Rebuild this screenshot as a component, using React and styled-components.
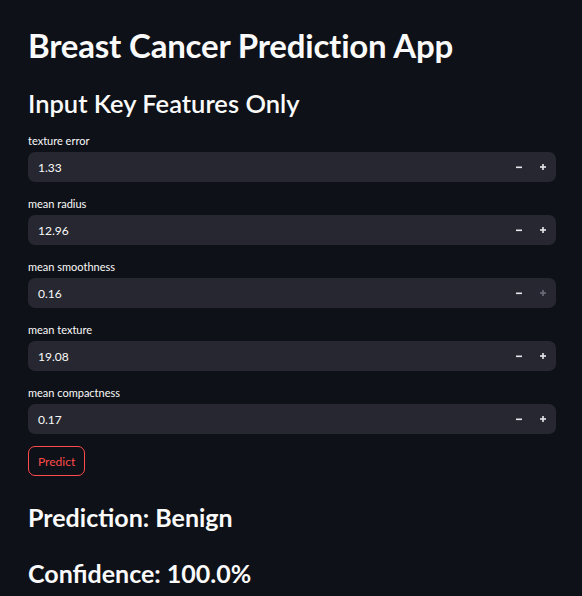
import React from "react";
import styled, { createGlobalStyle } from "styled-components";

const Global = createGlobalStyle`
  html, body { margin: 0; padding: 0; background: #0e1117; }
  body { font-family: Lato, "Noto Sans", sans-serif; color: #fafafa; }
  * { box-sizing: border-box; }
`;

const Page = styled.main`
  min-height: 596px;
  padding: 24px 26px 0 28px;
  display: flex;
  flex-direction: column;
`;

const Title = styled.h1`
  margin: 0;
  font-size: 33px;
  line-height: 42px;
  font-weight: 700;
  letter-spacing: -0.2px;
`;

const Subtitle = styled.h2`
  margin: 20px 0 14px;
  font-size: 25.5px;
  line-height: 34px;
  font-weight: 600;
`;

const Field = styled.div`
  display: flex;
  flex-direction: column;
  gap: 5px;
  margin-bottom: 15px;
`;

const Label = styled.label`
  font-size: 11px;
  line-height: 13px;
  color: #fafafa;
`;

const InputBox = styled.div`
  height: 30px;
  border-radius: 7px;
  background: #262730;
  display: flex;
  align-items: center;
  padding: 0 1px 0 10px;
`;

const Value = styled.span`
  flex: 1;
  font-size: 12px;
  color: #fafafa;
`;

const Step = styled.button`
  width: 24px;
  height: 30px;
  background: none;
  border: 0;
  padding: 0;
  display: flex;
  align-items: center;
  justify-content: center;
  color: ${(p) => (p.$disabled ? "#6b6e7a" : "#e6e6ea")};
`;

const Button = styled.button`
  align-self: flex-start;
  margin-top: -3px;
  height: 30px;
  padding: 0 9px;
  border: 1px solid #ff4b4b;
  border-radius: 7px;
  background: transparent;
  color: #ff4b4b;
  font-family: inherit;
  font-size: 12px;
`;

const Result = styled.h3`
  margin: ${(p) => p.$mt}px 0 0;
  font-size: 25px;
  line-height: 30px;
  font-weight: 700;
`;

const Minus = () => (
  <svg width="8" height="8" viewBox="0 0 8 8">
    <rect x="1" y="3.5" width="6" height="1.6" fill="currentColor" />
  </svg>
);
const Plus = () => (
  <svg width="8" height="8" viewBox="0 0 8 8">
    <rect x="1" y="3.2" width="6" height="1.6" fill="currentColor" />
    <rect x="3.2" y="1" width="1.6" height="6" fill="currentColor" />
  </svg>
);

const fields = [
  { label: "texture error", value: "1.33" },
  { label: "mean radius", value: "12.96" },
  { label: "mean smoothness", value: "0.16", plusDisabled: true },
  { label: "mean texture", value: "19.08" },
  { label: "mean compactness", value: "0.17" },
];

export default function App() {
  return (
    <>
      <Global />
      <Page>
        <Title>Breast Cancer Prediction App</Title>
        <Subtitle>Input Key Features Only</Subtitle>
        {fields.map((f) => (
          <Field key={f.label}>
            <Label>{f.label}</Label>
            <InputBox>
              <Value>{f.value}</Value>
              <Step><Minus /></Step>
              <Step $disabled={f.plusDisabled}><Plus /></Step>
            </InputBox>
          </Field>
        ))}
        <Button>Predict</Button>
        <Result $mt={26}>Prediction: Benign</Result>
        <Result $mt={26}>Confidence: 100.0%</Result>
      </Page>
    </>
  );
}
